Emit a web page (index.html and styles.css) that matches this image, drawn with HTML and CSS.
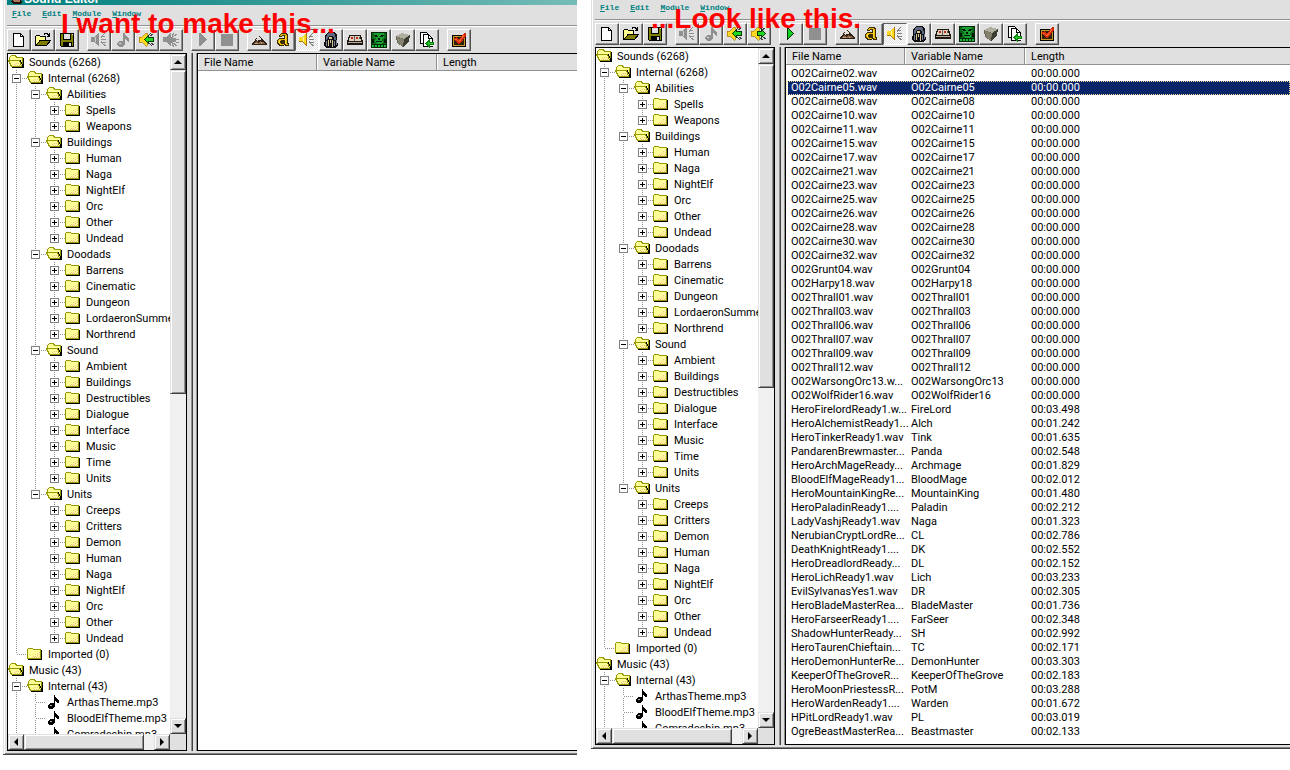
FILE: index.html
```html
<!DOCTYPE html>
<html lang="en">
<head>
  <meta charset="utf-8">
  <title>Sound Editor</title>
  <link rel="stylesheet" href="styles.css">
</head>
<body>
  <svg class="sprites" width="0" height="0" aria-hidden="true">
    <symbol id="new" viewBox="0 0 16 16">
      <path d="M2.500 1.500h7l3 3v10h-10z" fill="#fff" stroke="#000"/>
      <path d="M9.500 1.500v3h3" fill="none" stroke="#000"/>
    </symbol>
    <symbol id="open" viewBox="0 0 16 16">
      <path d="M.5 13.500v-9l1-1h3l1 1h5v4" fill="#ffff90" stroke="#000"/>
      <path d="M1 13.500l4-5h10.500l-4 5z" fill="#808000" stroke="#000"/>
      <path d="M9 2.500l1-1h2l2 2M14.500 1v3.500H12" fill="none" stroke="#000"/>
    </symbol>
    <symbol id="save" viewBox="0 0 16 16">
      <path d="M1.500 1.500h13v13h-12l-1-1z" fill="#808000" stroke="#000"/>
      <path d="M4 1h8v7H4z" fill="#000"/>
      <path d="M5 2h6v5H5z" fill="#e0e0e0"/>
      <path d="M4 10h9v5H4z" fill="#000"/>
      <path d="M10 11h2v3h-2zM13 2h1v1h-1z" fill="#e0e0e0"/>
    </symbol>
    <symbol id="speaker-off" viewBox="0 0 16 16">
      <path d="M0 5h3l4-4h1v13H7l-4-4H0z" fill="#909090"/>
      <path d="M4 5h1v5H4z" fill="#d0d0d0"/>
      <path d="M10 6l2-3 2-2M10 7.500h5M10 9l2 3 3 2M10 5l4-1M10 10l5 1" fill="none" stroke="#909090"/>
    </symbol>
    <symbol id="note-off" viewBox="0 0 16 16">
      <path d="M8 1h2l1 3 3 3v3h-1l-1-2-2-1v5l-1 2-2 1H4l-2-2v-2l2-2h4z" fill="#909090"/>
      <path d="M4 11h2v1H4z" fill="#e0e0e0"/>
    </symbol>
    <symbol id="in-off" viewBox="0 0 16 16">
      <path d="M0 5h3l4-4h1v4l2-1v2h3v4h-3v2l-2-1v3H7l-4-4H0z" fill="#909090"/>
      <path d="M9 4l2-3M10 5l4-3M13 7.500h3M10 11l4 3M9 12l2 3M13 10l3 1" fill="none" stroke="#909090"/>
    </symbol>
    <symbol id="speaker" viewBox="0 0 16 16">
      <path d="M0 5h3l4-4h1v13H7l-4-4H0z" fill="#ffd820"/>
      <path d="M0 9h3l4 4V1h1v13H7l-4-4H0z" fill="#a87800"/>
      <path d="M4 5h1v5H4z" fill="#fff4a0"/>
      <path d="M10 6l2-3 2-2M10 7.500h5M10 9l2 3 3 2M10 5l4-1M10 10l5 1" fill="none" stroke="#808080"/>
    </symbol>
    <symbol id="sound-in" viewBox="0 0 16 16">
      <path d="M0 5h3l4-4h1v13H7l-4-4H0z" fill="#ffd820" stroke="#a87800" stroke-width=".7"/>
      <path d="M9 4l3-3M11 4l3-2M10 11l3 3M12 11l3 2" fill="none" stroke="#404040"/>
      <path d="M5.500 7.500l4-4v2h4.500v4H9.500v2z" fill="#20d820" stroke="#003800"/>
    </symbol>
    <symbol id="sound-out" viewBox="0 0 16 16">
      <path d="M0 5h3l4-4h1v13H7l-4-4H0z" fill="#ffd820" stroke="#a87800" stroke-width=".7"/>
      <path d="M9 3l3-2M11 4l3-2M9 12l3 2M12 11l3 2" fill="none" stroke="#404040"/>
      <path d="M14.500 7.500l-4-4v2H6v4h4.500v2z" fill="#20d820" stroke="#003800"/>
    </symbol>
    <symbol id="play-off" viewBox="0 0 16 16">
      <path d="M4 1h1l7 6v1l-7 6H4z" fill="#909090"/>
    </symbol>
    <symbol id="play" viewBox="0 0 16 16">
      <path d="M4.500 1.500l6 6-6 6z" fill="#10d020" stroke="#003000"/>
    </symbol>
    <symbol id="stop-off" viewBox="0 0 16 16">
      <path d="M2 2h12v12H2z" fill="#909090"/>
    </symbol>
    <symbol id="terrain" viewBox="0 0 16 16">
      <path d="M0 12l4-4 2-3 2-2 3 4 2 2 3 3v1H1z" fill="#2c2018"/>
      <path d="M7 4h1l2 3-1 2-1-2-2 2-1-1z" fill="#e8e0d8"/>
      <path d="M2 12l3-3 2 2 2-2 2 2 1-2 2 3z" fill="#8a6440"/>
      <path d="M4 11h3v1H4zM10 10h1v2h-1z" fill="#c09878"/>
    </symbol>
    <symbol id="script" viewBox="0 0 16 16">
      <path d="M4 3l2-2h5l2 2v8h1v3h-4l-1-1-1 1H4l-2-2V8l2-2h5V4H7v1H4z" fill="#3a2c00"/>
      <path d="M5 3l1-1h4l2 2v8h1v1h-2l-1-1V8H6L5 9v2l1 1h3l-1 1H5l-2-2V8l2-1h5V4L9 3H7L6 4H5z" fill="#e8b800"/>
      <path d="M4 8h1v3H4zM10 4h1v8h-1z" fill="#ffe040"/>
    </symbol>
    <symbol id="object" viewBox="0 0 16 16">
      <path d="M5 0h6l3 3v5l1 5-2 3H3l-2-3 1-5V3z" fill="#101014"/>
      <path d="M5 1h5l2 2 1 4-1 3-1-5-2-1H6L5 5 4 9 3 6l1-4z" fill="#5c6880"/>
      <path d="M6 5h3v2H6zM5 8h1v6H5zM9 8h1v7H9zM7 8h1v3H7z" fill="#d8c890"/>
      <path d="M3 9h1v5H3zM11 9h1v5h-1zM13 8h1v5h-1z" fill="#788098"/>
    </symbol>
    <symbol id="campaign" viewBox="0 0 16 16">
      <path d="M2 3h12l2 7v3H0v-3z" fill="#201810"/>
      <path d="M3 4h10l1 5H2z" fill="#d8d0c0"/>
      <path d="M4 5h2v2H4zM9 5h2v2H9z" fill="#c82818"/>
      <path d="M7 4h1v5H7zM12 5h1v2h-1z" fill="#686050"/>
      <path d="M1 10h14v1H1z" fill="#b0a898"/>
    </symbol>
    <symbol id="ai" viewBox="0 0 16 16">
      <path d="M0 0h16v16H0z" fill="#002808"/>
      <path d="M1 1h14v11H1z" fill="#086818"/>
      <path d="M3 1h10v4l-2 2 1 3-2 2H6l-2-2 1-3-2-2z" fill="#18a030"/>
      <path d="M3 3h3l1 2H4zM10 3h3l-1 2H9zM7 6h2v2H7zM5 9h6v1H5zM1 7h2v4H1zM13 7h2v4h-2z" fill="#001804"/>
      <path d="M1 13h2v2H1zM4 13h2v2H4zM7 13h2v2H7zM10 13h2v2h-2zM13 13h2v2h-2z" fill="#18c030"/>
    </symbol>
    <symbol id="cube" viewBox="0 0 16 16">
      <path d="M1 4l6-3 8 2-1 7-6 5-6-4z" fill="#686858"/>
      <path d="M1 4l6-3 8 2-6 4z" fill="#b0ae9c"/>
      <path d="M9 7l6-4-1 7-6 5z" fill="#3c3c30"/>
      <path d="M2 5l7 2-1 7-5-3z" fill="#84826e"/>
    </symbol>
    <symbol id="import" viewBox="0 0 16 16">
      <path d="M1.500 .5h6l2 2v9h-8z" fill="#fff" stroke="#000"/>
      <path d="M4.500 2.500h5l4 4v8h-9z" fill="#fff" stroke="#000"/>
      <path d="M9.500 2.500v4h4" fill="none" stroke="#000"/>
      <path d="M6 11.500l4-4v2h5v4h-5v2z" fill="#fff"/>
      <path d="M7 11.500l3-3v2h4v2h-4v2z" fill="#20d020" stroke="#108018"/>
    </symbol>
    <symbol id="test" viewBox="0 0 16 16">
      <path d="M1 3h14v12H1z" fill="#000"/>
      <path d="M2.500 4.500h11v9h-11z" fill="#302010" stroke="#c89820"/>
      <path d="M3 6l3-1 2 3 5-7h2v3l-6 8H7L4 9z" fill="#d02808"/>
      <path d="M4 7h1l3 3 5-7" fill="none" stroke="#ff6830"/>
    </symbol>
    <symbol id="folder" viewBox="0 0 16 16">
      <path d="M1 14v-1h13V4h1v10z" fill="#000"/>
      <path d="M.5 12.500v-9l1-1h4l1 1h7v9z" fill="#ffff98" stroke="#989800"/>
      <path d="M8 8h1v1H8zM10 7h1v1h-1zM12 6h1v1h-1zM6 10h1v1H6zM8 10h1v1H8zM10 9h1v1h-1zM12 8h1v1h-1zM5 11h1v1H5zM7 11h1v1H7zM9 11h1v1H9zM11 11h1v1h-1zM12 10h1v1h-1z" fill="#ffb898"/>
    </symbol>
    <symbol id="folder-open" viewBox="0 0 16 16">
      <path d="M3 13h12V4h1v10H4z" fill="#000"/>
      <path d="M1.500 6.500v-3l2-2h4l1 2h6v9h-11z" fill="#ffff98" stroke="#989800"/>
      <path d="M.5 6.500h11l2 6h-10z" fill="#ffff98" stroke="#989800"/>
      <path d="M12 6h1v2h-1zM13 8h1v2h-1zM14 10h1v3h-1z" fill="#000"/>
      <path d="M6 10h1v1H6zM8 9h1v1H8zM10 9h1v1h-1zM7 11h1v1H7zM9 11h1v1H9zM11 11h1v1h-1z" fill="#ffb898"/>
    </symbol>
    <symbol id="note" viewBox="0 0 16 16">
      <path d="M8 1h1l1 3 3 3v2h-1l-3-2v5l-1 2-2 1H4l-2-1v-3l2-2h4z" fill="#000"/>
      <path d="M4 11h2v1H4z" fill="#a0b8b8"/>
    </symbol>
  </svg>

  <main class="screens">
    <section class="screen before">
      <div class="titlebar">
        <svg class="app-icon" viewBox="0 0 11 5"><path d="M1 0h9l1 2-2 2H2L0 2z" fill="#281008"/><path d="M2 0h7v2H3z" fill="#a87860"/></svg>
        <span>Sound Editor</span>
      </div>
      <nav class="menubar">
        <button><u>F</u>ile</button>
        <button><u>E</u>dit</button>
        <button><u>M</u>odule</button>
        <button><u>W</u>indow</button>
      </nav>
      <div class="toolbar">
        <div class="group">
          <button aria-label="New"><svg><use href="#new"/></svg></button>
          <button aria-label="Open"><svg><use href="#open"/></svg></button>
          <button aria-label="Save"><svg><use href="#save"/></svg></button>
        </div>
        <div class="group">
          <button aria-label="Sound" disabled><svg><use href="#speaker-off"/></svg></button>
          <button aria-label="Music" disabled><svg><use href="#note-off"/></svg></button>
          <button aria-label="Import sound"><svg><use href="#sound-in"/></svg></button>
          <button aria-label="Export sound" disabled><svg><use href="#in-off"/></svg></button>
        </div>
        <div class="group">
          <button aria-label="Play" disabled><svg><use href="#play-off"/></svg></button>
          <button aria-label="Stop" disabled><svg><use href="#stop-off"/></svg></button>
        </div>
        <div class="group">
          <button aria-label="Terrain"><svg><use href="#terrain"/></svg></button>
          <button aria-label="Triggers"><svg><use href="#script"/></svg></button>
          <button aria-label="Sounds" class="pressed"><svg><use href="#speaker"/></svg></button>
          <button aria-label="Objects"><svg><use href="#object"/></svg></button>
          <button aria-label="Campaign"><svg><use href="#campaign"/></svg></button>
          <button aria-label="AI"><svg><use href="#ai"/></svg></button>
          <button aria-label="Object manager"><svg><use href="#cube"/></svg></button>
          <button aria-label="Import manager"><svg><use href="#import"/></svg></button>
        </div>
        <div class="group">
          <button aria-label="Test map"><svg><use href="#test"/></svg></button>
        </div>
      </div>
      <div class="panes">
        <div class="tree-pane">
          <div class="tree"></div>
          <div class="scroll vertical">
            <button aria-label="Scroll up"><i class="up"></i></button>
            <div class="track"><div class="thumb"></div></div>
            <button aria-label="Scroll down"><i class="down"></i></button>
          </div>
          <div class="scroll horizontal">
            <button aria-label="Scroll left"><i class="left"></i></button>
            <div class="track"><div class="thumb"></div></div>
            <button aria-label="Scroll right"><i class="right"></i></button>
          </div>
        </div>
        <div class="splitter"></div>
        <div class="list-pane">
          <table>
            <thead>
              <tr><th class="col-file">File Name</th><th class="col-var">Variable Name</th><th>Length</th></tr>
            </thead>
            <tbody></tbody>
          </table>
        </div>
      </div>
      <p class="note">I want to make this...</p>
    </section>

    <section class="screen after">
      <nav class="menubar">
        <button><u>F</u>ile</button>
        <button><u>E</u>dit</button>
        <button><u>M</u>odule</button>
        <button><u>W</u>indow</button>
      </nav>
      <div class="toolbar">
        <div class="group">
          <button aria-label="New"><svg><use href="#new"/></svg></button>
          <button aria-label="Open"><svg><use href="#open"/></svg></button>
          <button aria-label="Save"><svg><use href="#save"/></svg></button>
        </div>
        <div class="group">
          <button aria-label="Sound" disabled><svg><use href="#speaker-off"/></svg></button>
          <button aria-label="Music" disabled><svg><use href="#note-off"/></svg></button>
          <button aria-label="Import sound"><svg><use href="#sound-in"/></svg></button>
          <button aria-label="Export sound"><svg><use href="#sound-out"/></svg></button>
        </div>
        <div class="group">
          <button aria-label="Play"><svg><use href="#play"/></svg></button>
          <button aria-label="Stop" disabled><svg><use href="#stop-off"/></svg></button>
        </div>
        <div class="group">
          <button aria-label="Terrain"><svg><use href="#terrain"/></svg></button>
          <button aria-label="Triggers"><svg><use href="#script"/></svg></button>
          <button aria-label="Sounds" class="pressed"><svg><use href="#speaker"/></svg></button>
          <button aria-label="Objects"><svg><use href="#object"/></svg></button>
          <button aria-label="Campaign"><svg><use href="#campaign"/></svg></button>
          <button aria-label="AI"><svg><use href="#ai"/></svg></button>
          <button aria-label="Object manager"><svg><use href="#cube"/></svg></button>
          <button aria-label="Import manager"><svg><use href="#import"/></svg></button>
        </div>
        <div class="group">
          <button aria-label="Test map"><svg><use href="#test"/></svg></button>
        </div>
      </div>
      <div class="panes">
        <div class="tree-pane">
          <div class="tree"></div>
          <div class="scroll vertical">
            <button aria-label="Scroll up"><i class="up"></i></button>
            <div class="track"><div class="thumb"></div></div>
            <button aria-label="Scroll down"><i class="down"></i></button>
          </div>
          <div class="scroll horizontal">
            <button aria-label="Scroll left"><i class="left"></i></button>
            <div class="track"><div class="thumb"></div></div>
            <button aria-label="Scroll right"><i class="right"></i></button>
          </div>
        </div>
        <div class="splitter"></div>
        <div class="list-pane">
          <table>
            <thead>
              <tr><th class="col-file">File Name</th><th class="col-var">Variable Name</th><th>Length</th></tr>
            </thead>
            <tbody id="sound-rows"></tbody>
          </table>
        </div>
      </div>
      <p class="note">...Look like this.</p>
    </section>
  </main>

  <script src="script.js"></script>
</body>
</html>
```

FILE: styles.css
```css
* {
  box-sizing: border-box;
}

body {
  margin: 0;
  height: 100vh;
  overflow: hidden;
  background-color: #fff;
  color: #000;
  font-family: Roboto, "Liberation Sans", Arial, sans-serif;
  font-size: 11px;
}

button {
  margin: 0;
  padding: 0;
  font: inherit;
}

.sprites {
  position: absolute;
}

svg {
  shape-rendering: crispEdges;
}

.screens {
  display: grid;
  grid-template-columns: 574fr 699fr;
  column-gap: 14px;
  align-items: start;
  padding-left: 3px;
}

.screen {
  position: relative;
  display: flex;
  flex-direction: column;
  min-width: 0;
  height: calc(100vh - 15px);
  padding-left: 4px;
  background-color: #e0e0e0;
  border-bottom: 1px solid #404040;
  box-shadow: inset 1px 0 #e0e0e0, inset 2px 0 #fff, inset 0 -1px #808080;
}

/* the second window is cut off just under its title bar */
.after {
  height: calc(100vh - 20px);
  margin-top: -1px;
}

.titlebar {
  display: flex;
  align-items: flex-end;
  gap: 2px;
  height: 5px;
  padding-left: 4px;
  overflow: hidden;
  background: linear-gradient(to right, #008080, #1f8f8c 30%, #76bcb8);
  color: #fff;
  font: bold 12px/12px "Liberation Sans", Arial, sans-serif;
}

.app-icon {
  width: 11px;
  height: 5px;
}

.menubar {
  display: flex;
  gap: 1px;
  height: 21px;
  border-bottom: 1px solid #909090;
}

.menubar button {
  height: 18px;
  padding: 0 5px;
  border: none;
  background: none;
  color: #008080;
  font: bold 8px/18px "Liberation Mono", "Courier New", monospace;
}

.toolbar {
  display: flex;
  gap: 8px;
  height: 27px;
  padding-top: 2px;
  border-top: 1px solid #fff;
}

.group {
  display: flex;
}

.toolbar button {
  display: flex;
  justify-content: center;
  align-items: center;
  width: 24px;
  height: 22px;
  border: 1px solid;
  border-color: #fff #505050 #505050 #fff;
  background-color: #e0e0e0;
  box-shadow: inset -1px -1px #909090;
}

.toolbar svg {
  width: 16px;
  height: 16px;
}

.toolbar .pressed {
  border-color: #606060 #fff #fff #606060;
  background: repeating-conic-gradient(#fff 0 25%, #e0e0e0 0 50%) 0 0 / 2px 2px;
  box-shadow: none;
}

.panes {
  display: flex;
  flex: 1;
  min-height: 0;
  margin-bottom: 3px;
}

.tree-pane {
  display: grid;
  grid-template-columns: 1fr 16px;
  grid-template-rows: 1fr 16px;
  width: 180px;
  border: 1px solid #000;
}

.tree {
  min-width: 0;
  min-height: 0;
  overflow: hidden;
  background-color: #fff;
}

.tree ul {
  margin: 0;
  padding: 0;
  list-style: none;
}

.tree ul ul ul {
  padding-left: 19px;
}

/* dotted line running down through the expanders */
.tree ul ul li {
  background: repeating-linear-gradient(#909090 0 1px, #fff 1px 2px) 8px 0 / 1px 100% no-repeat;
}

.tree ul ul li.last {
  background-size: 1px 8px;
}

.node {
  display: flex;
  align-items: center;
  height: 16px;
  white-space: nowrap;
}

.node svg {
  flex: none;
  width: 16px;
  height: 16px;
  margin-right: 5px;
}

.expander {
  flex: none;
  width: 9px;
  height: 9px;
  margin-left: 4px;
  border: 1px solid #808080;
  background: linear-gradient(#000, #000) center / 5px 1px no-repeat #fff;
}

.expander.closed {
  background: linear-gradient(#000, #000) center / 5px 1px no-repeat, linear-gradient(#000, #000) center / 1px 5px no-repeat #fff;
}

.dots {
  flex: none;
  width: 6px;
  height: 1px;
  background: repeating-linear-gradient(to right, #fff 0 1px, #909090 1px 2px);
}

.dots.leaf {
  width: 11px;
  margin-left: 8px;
}

.scroll {
  display: flex;
  background-color: #f0f0f0;
}

.vertical {
  flex-direction: column;
}

.scroll button,
.thumb {
  border: 1px solid;
  border-color: #e0e0e0 #404040 #404040 #e0e0e0;
  background-color: #e0e0e0;
  box-shadow: inset 1px 1px #fff, inset -1px -1px #909090;
}

.scroll button {
  display: flex;
  flex: none;
  justify-content: center;
  align-items: center;
  width: 16px;
  height: 16px;
}

.scroll i {
  border: 4px solid transparent;
}

.scroll .up {
  border-top: none;
  border-bottom-color: #000;
}

.scroll .down {
  border-bottom: none;
  border-top-color: #000;
}

.scroll .left {
  border-left: none;
  border-right-color: #000;
}

.scroll .right {
  border-right: none;
  border-left-color: #000;
}

.track {
  flex: 1;
}

.vertical .thumb {
  height: 50%;
}

.horizontal .thumb {
  width: 92%;
  height: 100%;
}

.splitter {
  width: 10px;
  background: linear-gradient(to right, #e0e0e0 4px, #909090 4px 5px, #404040 5px 6px, #e0e0e0 6px 9px, #909090 9px);
}

.list-pane {
  flex: 1;
  min-width: 0;
  overflow: hidden;
  border: 1px solid #000;
  border-right: none;
  background-color: #fff;
}

table {
  width: 100%;
  table-layout: fixed;
  border-collapse: separate;
  border-spacing: 0;
}

th {
  height: 17px;
  padding: 1px 0 0 6px;
  border-right: 1px solid #909090;
  border-bottom: 1px solid #909090;
  background-color: #e0e0e0;
  box-shadow: inset 1px 0 #fff;
  font-weight: normal;
  line-height: 15px;
  text-align: left;
}

th:last-child {
  border-right: none;
}

.col-file {
  width: 119px;
}

.col-var {
  width: 120px;
}

tbody::before {
  content: "";
  display: block;
  height: 2px;
}

td {
  height: 14px;
  padding: 0 0 0 6px;
  line-height: 14px;
  white-space: nowrap;
}

td:first-child {
  padding-left: 3px;
  border-left: 2px solid #fff;
}

.selected {
  background-color: #0a246a;
  color: #fff;
  outline: 1px dotted #f5db95;
  outline-offset: -1px;
}

.note {
  position: absolute;
  top: 8px;
  left: 58px;
  margin: 0;
  color: #f00;
  font: bold 28px/32px "Liberation Sans", Arial, sans-serif;
  white-space: nowrap;
}

.after .note {
  top: 4px;
  left: 60px;
}
```

FILE: script.js
```js
const tree = [
  { name: 'Sounds (6268)', children: [
    { name: 'Internal (6268)', children: [
      { name: 'Abilities', children: ['Spells', 'Weapons'] },
      { name: 'Buildings', children: ['Human', 'Naga', 'NightElf', 'Orc', 'Other', 'Undead'] },
      { name: 'Doodads', children: ['Barrens', 'Cinematic', 'Dungeon', 'LordaeronSumme', 'Northrend'] },
      { name: 'Sound', children: ['Ambient', 'Buildings', 'Destructibles', 'Dialogue', 'Interface', 'Music', 'Time', 'Units'] },
      { name: 'Units', children: ['Creeps', 'Critters', 'Demon', 'Human', 'Naga', 'NightElf', 'Orc', 'Other', 'Undead'] }
    ] },
    { name: 'Imported (0)', empty: true }
  ] },
  { name: 'Music (43)', more: true, children: [
    { name: 'Internal (43)', more: true, children: [
      { name: 'ArthasTheme.mp3', file: true },
      { name: 'BloodElfTheme.mp3', file: true },
      { name: 'Comradeship.mp3', file: true }
    ] }
  ] }
];

const sounds = [
  ['O02Cairne02.wav', 'O02Cairne02', '00:00.000'],
  ['O02Cairne05.wav', 'O02Cairne05', '00:00.000'],
  ['O02Cairne08.wav', 'O02Cairne08', '00:00.000'],
  ['O02Cairne10.wav', 'O02Cairne10', '00:00.000'],
  ['O02Cairne11.wav', 'O02Cairne11', '00:00.000'],
  ['O02Cairne15.wav', 'O02Cairne15', '00:00.000'],
  ['O02Cairne17.wav', 'O02Cairne17', '00:00.000'],
  ['O02Cairne21.wav', 'O02Cairne21', '00:00.000'],
  ['O02Cairne23.wav', 'O02Cairne23', '00:00.000'],
  ['O02Cairne25.wav', 'O02Cairne25', '00:00.000'],
  ['O02Cairne26.wav', 'O02Cairne26', '00:00.000'],
  ['O02Cairne28.wav', 'O02Cairne28', '00:00.000'],
  ['O02Cairne30.wav', 'O02Cairne30', '00:00.000'],
  ['O02Cairne32.wav', 'O02Cairne32', '00:00.000'],
  ['O02Grunt04.wav', 'O02Grunt04', '00:00.000'],
  ['O02Harpy18.wav', 'O02Harpy18', '00:00.000'],
  ['O02Thrall01.wav', 'O02Thrall01', '00:00.000'],
  ['O02Thrall03.wav', 'O02Thrall03', '00:00.000'],
  ['O02Thrall06.wav', 'O02Thrall06', '00:00.000'],
  ['O02Thrall07.wav', 'O02Thrall07', '00:00.000'],
  ['O02Thrall09.wav', 'O02Thrall09', '00:00.000'],
  ['O02Thrall12.wav', 'O02Thrall12', '00:00.000'],
  ['O02WarsongOrc13.w...', 'O02WarsongOrc13', '00:00.000'],
  ['O02WolfRider16.wav', 'O02WolfRider16', '00:00.000'],
  ['HeroFirelordReady1.w...', 'FireLord', '00:03.498'],
  ['HeroAlchemistReady1...', 'Alch', '00:01.242'],
  ['HeroTinkerReady1.wav', 'Tink', '00:01.635'],
  ['PandarenBrewmaster...', 'Panda', '00:02.548'],
  ['HeroArchMageReady...', 'Archmage', '00:01.829'],
  ['BloodElfMageReady1...', 'BloodMage', '00:02.012'],
  ['HeroMountainKingRe...', 'MountainKing', '00:01.480'],
  ['HeroPaladinReady1....', 'Paladin', '00:02.212'],
  ['LadyVashjReady1.wav', 'Naga', '00:01.323'],
  ['NerubianCryptLordRe...', 'CL', '00:02.786'],
  ['DeathKnightReady1....', 'DK', '00:02.552'],
  ['HeroDreadlordReady...', 'DL', '00:02.152'],
  ['HeroLichReady1.wav', 'Lich', '00:03.233'],
  ['EvilSylvanasYes1.wav', 'DR', '00:02.305'],
  ['HeroBladeMasterRea...', 'BladeMaster', '00:01.736'],
  ['HeroFarseerReady1....', 'FarSeer', '00:02.348'],
  ['ShadowHunterReady...', 'SH', '00:02.992'],
  ['HeroTaurenChieftain...', 'TC', '00:02.171'],
  ['HeroDemonHunterRe...', 'DemonHunter', '00:03.303'],
  ['KeeperOfTheGroveR...', 'KeeperOfTheGrove', '00:02.183'],
  ['HeroMoonPriestessR...', 'PotM', '00:03.288'],
  ['HeroWardenReady1....', 'Warden', '00:01.672'],
  ['HPitLordReady1.wav', 'PL', '00:03.019'],
  ['OgreBeastMasterRea...', 'Beastmaster', '00:02.133']
];

function renderNodes(nodes, level, more) {
  const items = nodes.map((node, i) => {
    if (typeof node === 'string') {
      node = { name: node };
    }
    const last = i === nodes.length - 1 && !more;
    let lead = '';
    if (level > 0) {
      if (node.file || node.empty) {
        lead = '<span class="dots leaf"></span>';
      } else {
        const state = node.children ? 'opened' : 'closed';
        lead = `<button class="expander ${state}" aria-label="Toggle ${node.name}"></button><span class="dots"></span>`;
      }
    }
    const icon = node.file ? 'note' : node.children ? 'folder-open' : 'folder';
    return `
      <li class="${last ? 'last' : ''}">
        <div class="node">${lead}<svg><use href="#${icon}"/></svg><span>${node.name}</span></div>
        ${node.children ? renderNodes(node.children, level + 1, node.more) : ''}
      </li>`;
  });
  return `<ul>${items.join('')}</ul>`;
}

document.querySelectorAll('.tree').forEach((pane) => {
  pane.innerHTML = renderNodes(tree, 0, false);
});

document.getElementById('sound-rows').innerHTML = sounds
  .map((row, i) => `<tr class="${i === 1 ? 'selected' : ''}">${row.map((cell) => `<td>${cell}</td>`).join('')}</tr>`)
  .join('');
```
